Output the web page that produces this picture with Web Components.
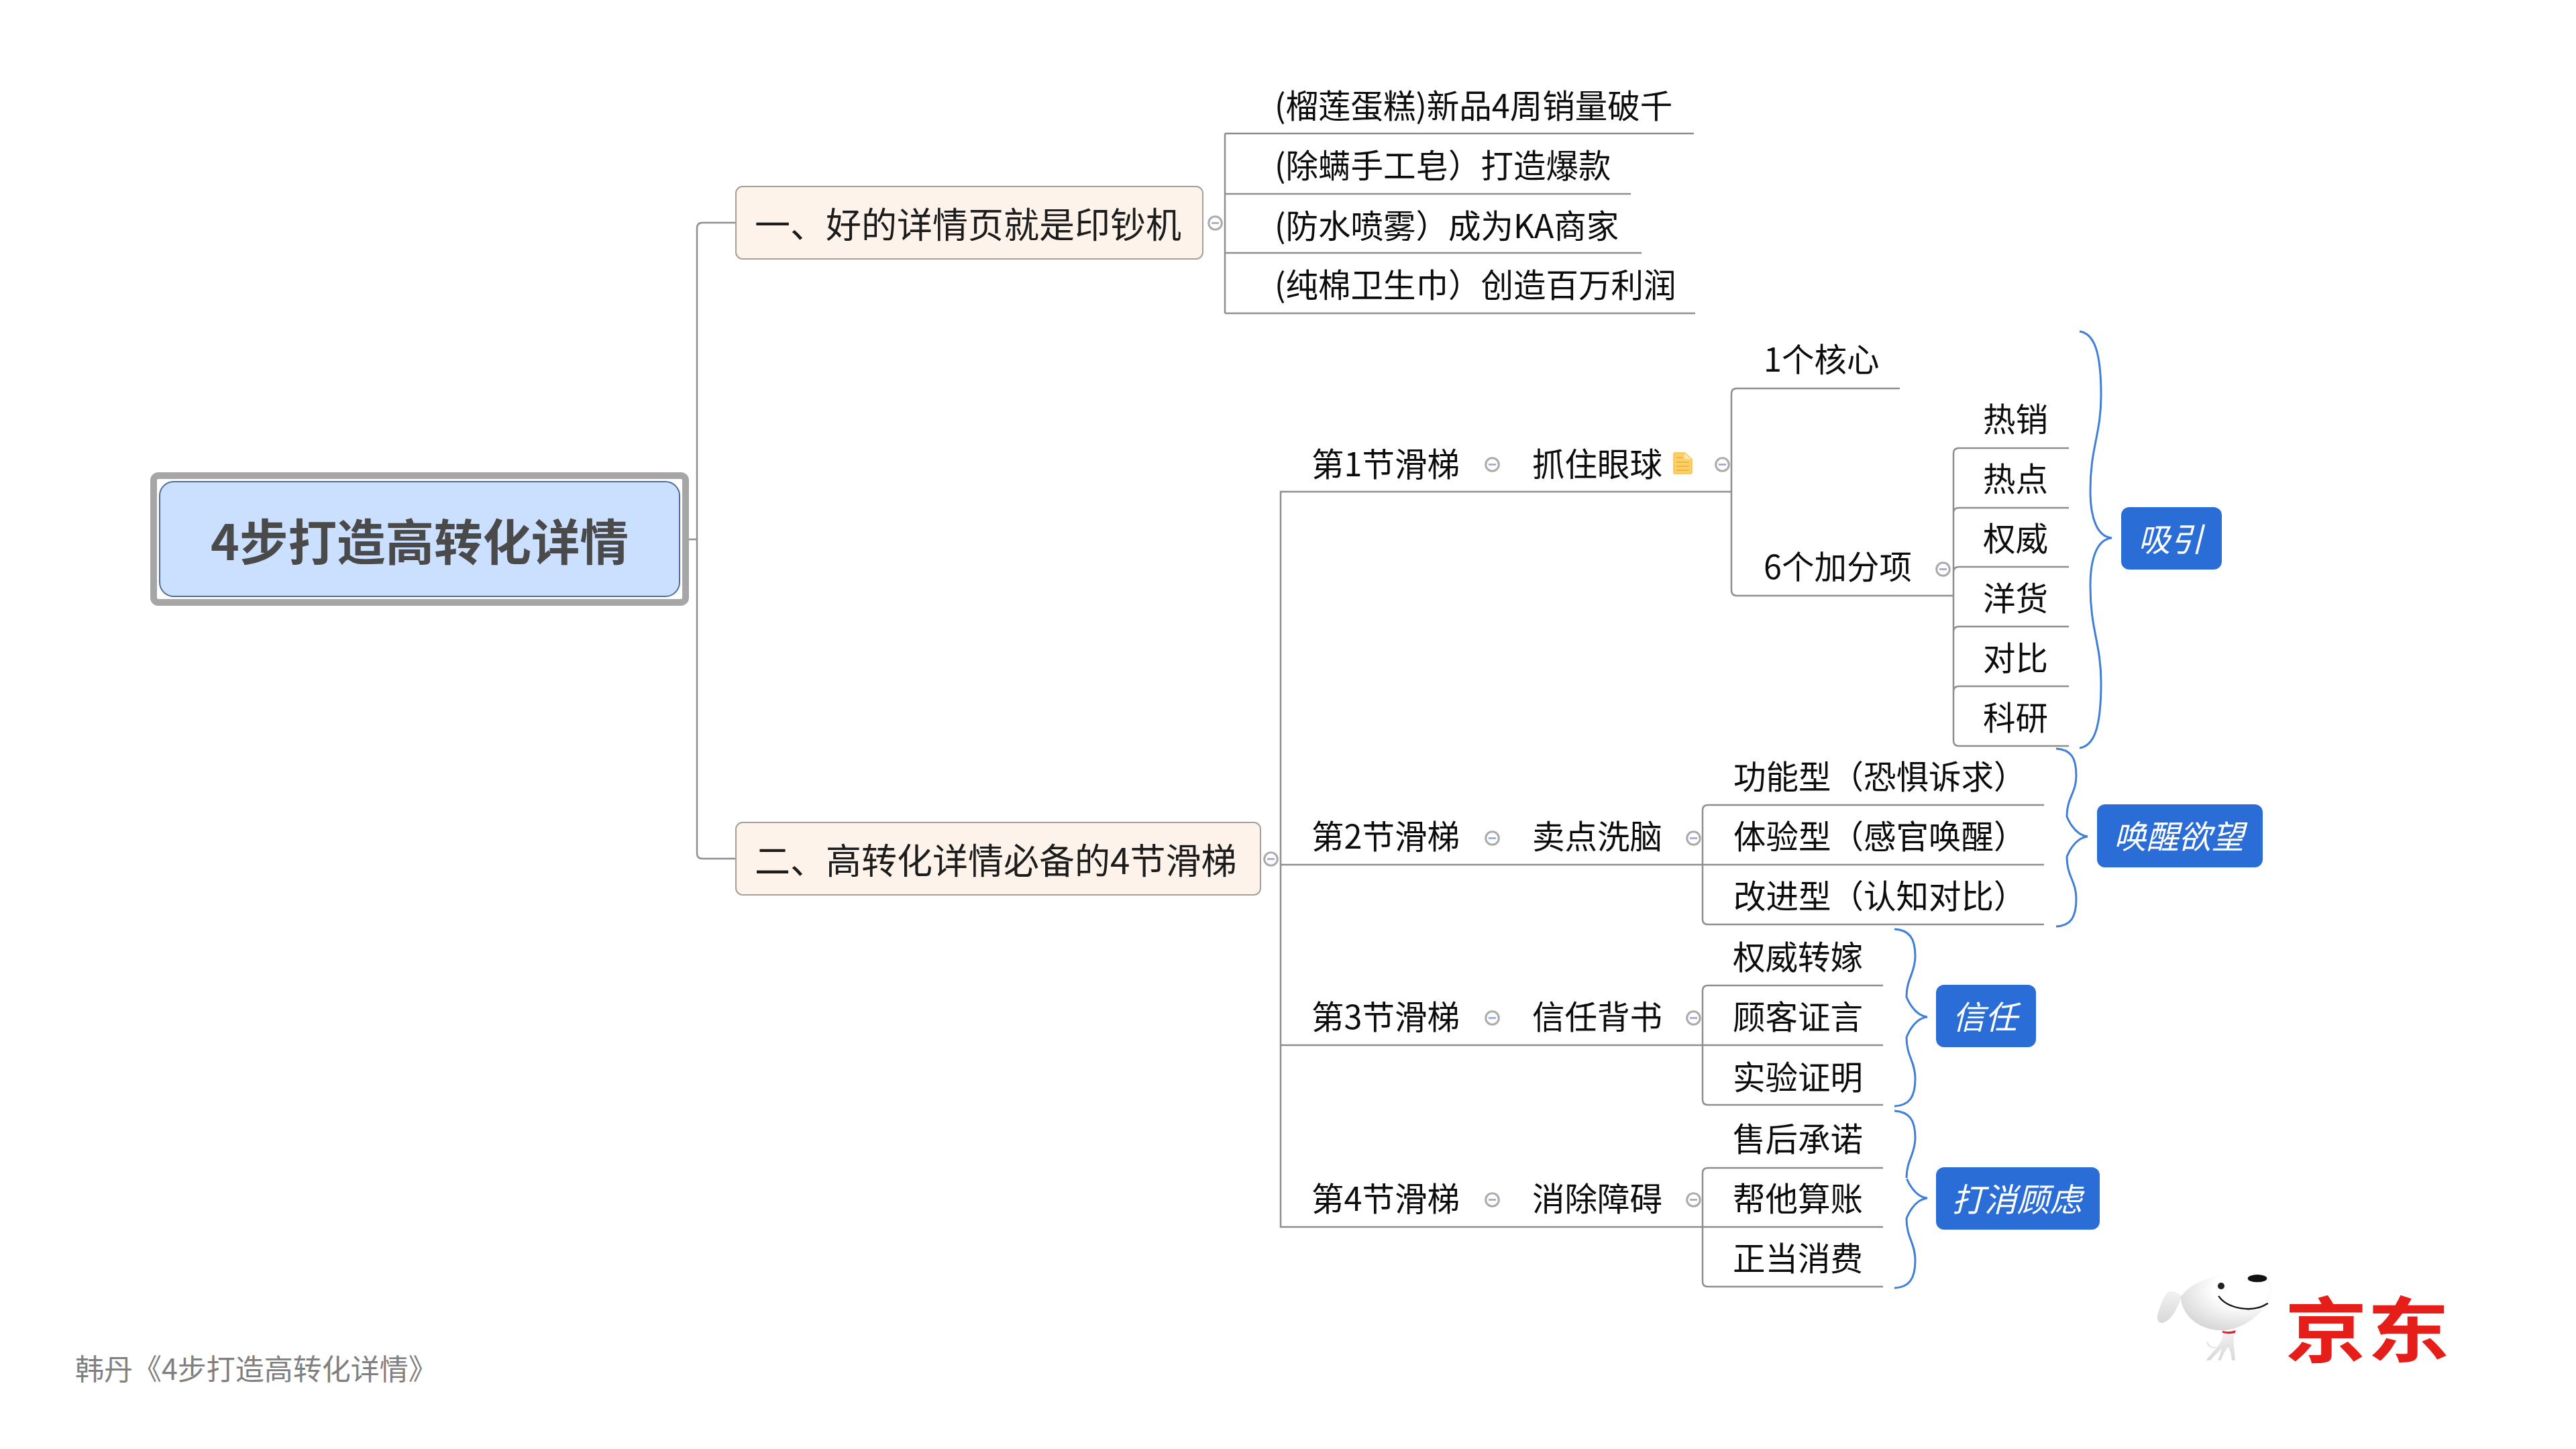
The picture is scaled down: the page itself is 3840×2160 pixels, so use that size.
<!DOCTYPE html>
<html lang="zh">
<head>
<meta charset="utf-8">
<title>4步打造高转化详情</title>
<style>
  html, body { margin: 0; background: #fff; }
  body { font-family: "Noto Sans CJK SC", "Liberation Sans", sans-serif; }
</style>
</head>
<body>
<mind-map></mind-map>

<script>
(function () {
  const FONT = '"Noto Sans CJK SC", "Liberation Sans", sans-serif';
  const LINE = '#8e8e8e';
  const BRACE = '#3f7fd8';

  // everything on the canvas sits at a coordinate given by attributes
  class Placed extends HTMLElement {
    get styles() { return ''; }
    get markup() { return '<slot></slot>'; }
    connectedCallback() {
      if (this.shadowRoot) return;
      const shadow = this.attachShadow({ mode: 'open' });
      shadow.innerHTML = `<style>:host { position: absolute; display: block; font-family: ${FONT}; } ${this.styles}</style>${this.markup}`;
      const num = n => this.getAttribute(n);
      this.style.left = num('x') + 'px';
      this.style.top = num('y') + 'px';
      if (num('w')) this.style.width = num('w') + 'px';
      if (num('h')) this.style.height = num('h') + 'px';
      if (num('size')) this.style.fontSize = num('size') + 'px';
    }
  }

  // plain text label: x = left edge, y = vertical centre
  class MapLabel extends Placed {
    get styles() {
      return `:host { font-size: 48.5px; line-height: 1; color: #0c0c0c; white-space: nowrap; transform: translate(-2px, calc(-50% - 3px)); }`;
    }
  }

  class MapRoot extends Placed {
    get styles() {
      return `
        :host { box-sizing: border-box; border: 10px solid #a6a6a6; border-radius: 12px; padding: 3px; background: #fff; }
        .inner {
          box-sizing: border-box; height: 100%;
          display: flex; align-items: center; justify-content: center;
          background: #cbdffe; border: 2px solid #4d6c9d; border-radius: 22px;
          color: #4a4a4a; font-size: 72.5px; font-weight: 700; white-space: nowrap;
        }`;
    }
    get markup() { return '<div class="inner"><slot></slot></div>'; }
  }

  class MapTopic extends Placed {
    get styles() {
      return `
        :host {
          box-sizing: border-box; display: flex; align-items: center; padding-left: 27px;
          background: #fdf3ea; border: 2px solid #a5a098; border-radius: 11px;
          color: #1c1c1c; font-size: 53px; white-space: nowrap;
        }`;
    }
  }

  class MapTag extends Placed {
    get styles() {
      return `
        :host {
          box-sizing: border-box; display: flex; align-items: center; justify-content: center; padding: 0 3px 4px 0;
          background: #2b6dd6; border-radius: 12px;
          color: #fff; font-size: 48.5px; font-style: italic; white-space: nowrap;
        }`;
    }
  }

  // the little collapse circle; x,y = centre
  class MapFold extends Placed {
    get styles() {
      return `:host { width: 23px; height: 23px; margin: -11.5px 0 0 -11.5px; } svg { display: block; }`;
    }
    get markup() {
      return `<svg width="23" height="23" viewBox="0 0 23 23">
        <circle cx="11.5" cy="11.5" r="9.8" fill="#fff" stroke="#ababab" stroke-width="3"/>
        <rect x="6" y="10.2" width="11" height="2.6" fill="#9aa6d8"/>
      </svg>`;
    }
  }

  class MapNote extends Placed {
    get styles() { return `svg { display: block; }`; }
    get markup() {
      return `<svg width="29" height="33" viewBox="0 0 29 33">
        <path d="M2.5 1h15l10.500 9.500v19a2.500 2.500 0 0 1-2.500 2.500h-23a1.500 1.500 0 0 1-1.500-1.500v-28a1.500 1.500 0 0 1 1.500-1.500z" fill="#fbd06a" stroke="#f7c04a" stroke-width="1.500"/>
        <path d="M17 1.500v9h10.500z" fill="#fde7ae"/>
        <path d="M5 8h9M5 15h19M5 21h19M5 27h19" stroke="#f3b535" stroke-width="2.200"/>
      </svg>`;
    }
  }

  class JdMark extends Placed {
    get styles() {
      return `
        :host { width: 500px; height: 200px; }
        svg { position: absolute; left: 0; top: 0; }
        .word {
          position: absolute; left: 226px; top: 63px;
          color: #e61e19; font-size: 118px; font-weight: 700; line-height: 1; white-space: nowrap;
          transform-origin: 0 0; transform: scale(1.04, .9);
        }`;
    }
    get markup() {
      return `<svg width="214" height="174" viewBox="0 0 642 522">
        <defs>
          <radialGradient id="head" cx=".66" cy=".28" r=".85">
            <stop offset=".35" stop-color="#fff"/><stop offset="1" stop-color="#cfcfcf"/>
          </radialGradient>
          <linearGradient id="limb" x1="0" y1="0" x2="0" y2="1">
            <stop offset="0" stop-color="#f1f1f1"/><stop offset="1" stop-color="#d8d8d8"/>
          </linearGradient>
        </defs>
        <path d="M165 195C185 195 205 205 218 216C205 250 180 322 130 337C105 335 103 310 113 285C125 250 140 200 165 195Z" fill="url(#limb)"/>
        <path d="M330 420C335 440 350 452 370 445" fill="none" stroke="#e2e2e2" stroke-width="6"/>
        <path d="M405 380C400 420 370 450 325 503H345C365 480 385 462 396 450C392 470 385 490 378 503H392C400 480 410 460 425 445C435 460 440 485 440 503H455C455 470 445 420 452 380Z" fill="url(#limb)"/>
        <path d="M212 225C240 160 380 105 520 110C590 112 625 140 620 185C612 260 530 350 420 368C330 378 225 330 212 225Z" fill="url(#head)"/>
        <path d="M398 371Q428 380 458 369L456 381Q428 388 400 381Z" fill="#d8262a"/>
        <ellipse cx="555" cy="137" rx="43" ry="17" fill="#111"/>
        <circle cx="393" cy="171" r="15" fill="#222"/>
        <path d="M383 218C420 270 530 295 600 250" fill="none" stroke="#111" stroke-width="7" stroke-linecap="round"/>
      </svg>
      <span class="word"><slot></slot></span>`;
    }
  }

  function brace(tx, sx, nx, ax, top, ay, bot) {
    const half = (from, dir, h) => {
      const y = f => from + dir * f * h;
      return [y(.01), y(.1), y(.31), y(.5), y(.56), y(.77)];
    };
    const a = half(top, 1, ay - top), b = half(bot, -1, bot - ay);
    return `M${tx} ${top}C${tx + 22} ${a[0]} ${sx} ${a[1]} ${sx} ${a[2]}` +
      `C${sx} ${a[3]} ${nx} ${a[4]} ${nx} ${a[5]}` +
      `C${nx} ${ay - 30} ${nx + 10} ${ay - 2} ${ax} ${ay}` +
      `C${nx + 10} ${ay + 2} ${nx} ${ay + 30} ${nx} ${b[5]}` +
      `C${nx} ${b[4]} ${sx} ${b[3]} ${sx} ${b[2]}` +
      `C${sx} ${b[1]} ${tx + 22} ${b[0]} ${tx} ${bot}`;
  }

  // one rounded "[" with its own top and bottom line ends
  const bracket = (x, top, bot, endTop, endBot = endTop) =>
    `M${endTop} ${top}H${x + 8}Q${x} ${top} ${x} ${top + 8}V${bot - 8}Q${x} ${bot} ${x + 8} ${bot}H${endBot}`;

  const links = [
    'M1016 804H1039',
    bracket(1039, 332, 1280, 1096),
    // first topic's leaves
    'M1826 199V467M1826 199H2525M1826 289H2431M1826 377H2447M1826 467H2527',
    // second topic's stem
    'M2581 733H1909V1829H2538M1909 1289H2538M1909 1558H2538',
    bracket(2581, 579, 888, 2832, 2912),
    bracket(2912, 668, 1112, 3084),
    'M3084 757H2920Q2912 757 2912 765M3084 845H2920Q2912 845 2912 853M3084 934H2920Q2912 934 2912 942M3084 1023H2920Q2912 1023 2912 1031',
    bracket(2538, 1200, 1378, 3047), 'M2538 1289H3047',
    bracket(2538, 1469, 1647, 2807), 'M2538 1558H2807',
    bracket(2538, 1741, 1918, 2807), 'M2538 1829H2807'
  ];

  const braces = [
    brace(3100, 3132, 3116, 3148, 494, 802, 1115),
    brace(3065, 3095, 3081, 3112, 1116, 1247, 1381),
    brace(2824, 2855, 2842, 2873, 1385, 1516, 1649),
    brace(2824, 2855, 2842, 2873, 1656, 1786, 1920)
  ];

  const labels = [
    [1902, 158, '(榴莲蛋糕)新品4周销量破千'],
    [1902, 247, '(除螨手工皂）打造爆款'],
    [1902, 337, '(防水喷雾）成为KA商家'],
    [1902, 425, '(纯棉卫生巾）创造百万利润'],
    [1957, 692, '第1节滑梯'], [2286, 692, '抓住眼球'],
    [2631, 536, '1个核心'], [2631, 845, '6个加分项'],
    [2958, 625, '热销'], [2958, 714, '热点'], [2958, 803, '权威'],
    [2958, 892, '洋货'], [2958, 981, '对比'], [2958, 1070, '科研'],
    [1957, 1247, '第2节滑梯'], [2286, 1247, '卖点洗脑'],
    [2586, 1158, '功能型（恐惧诉求）'], [2586, 1247, '体验型（感官唤醒）'], [2586, 1336, '改进型（认知对比）'],
    [1957, 1516, '第3节滑梯'], [2286, 1516, '信任背书'],
    [2585, 1427, '权威转嫁'], [2585, 1516, '顾客证言'], [2585, 1606, '实验证明'],
    [1957, 1787, '第4节滑梯'], [2286, 1787, '消除障碍'],
    [2585, 1698, '售后承诺'], [2585, 1787, '帮他算账'], [2585, 1876, '正当消费']
  ];

  const folds = [
    [1811, 332], [1894, 1280], [2224, 692], [2567, 692], [2896, 848],
    [2224, 1249], [2524, 1249], [2224, 1517], [2524, 1517], [2224, 1788], [2524, 1788]
  ];

  const tags = [
    [3162, 756, 150, 93, '吸引'],
    [3126, 1199, 247, 94, '唤醒欲望'],
    [2886, 1468, 149, 93, '信任'],
    [2886, 1740, 244, 93, '打消顾虑']
  ];

  class MindMap extends HTMLElement {
    connectedCallback() {
      const shadow = this.attachShadow({ mode: 'open' });
      shadow.innerHTML = `
        <style>
          :host { position: relative; display: block; width: 3840px; height: 2160px; background: #fff; overflow: hidden; }
          svg { position: absolute; left: 0; top: 0; }
          .credit { color: #808080; }
        </style>
        <svg width="3840" height="2160" fill="none">
          <path d="${links.join('')}" stroke="${LINE}" stroke-width="2.500"/>
          <path d="${braces.join('')}" stroke="${BRACE}" stroke-width="3"/>
        </svg>
        <map-root x="224" y="704" w="803" h="199">4步打造高转化详情</map-root>
        <map-topic x="1096" y="277" w="698" h="110">一、好的详情页就是印钞机</map-topic>
        <map-topic x="1096" y="1225" w="784" h="110">二、高转化详情必备的4节滑梯</map-topic>
        ${labels.map(([x, y, t]) => `<map-label x="${x}" y="${y}">${t}</map-label>`).join('')}
        ${folds.map(([x, y]) => `<map-fold x="${x}" y="${y}"></map-fold>`).join('')}
        <map-note x="2494" y="674"></map-note>
        ${tags.map(([x, y, w, h, t]) => `<map-tag x="${x}" y="${y}" w="${w}" h="${h}">${t}</map-tag>`).join('')}
        <map-label class="credit" x="114" y="2041" size="43">韩丹《4步打造高转化详情》</map-label>
        <jd-mark x="3180" y="1860">京东</jd-mark>`;
    }
  }

  customElements.define('map-label', MapLabel);
  customElements.define('map-root', MapRoot);
  customElements.define('map-topic', MapTopic);
  customElements.define('map-tag', MapTag);
  customElements.define('map-fold', MapFold);
  customElements.define('map-note', MapNote);
  customElements.define('jd-mark', JdMark);
  customElements.define('mind-map', MindMap);
})();
</script>
</body>
</html>
